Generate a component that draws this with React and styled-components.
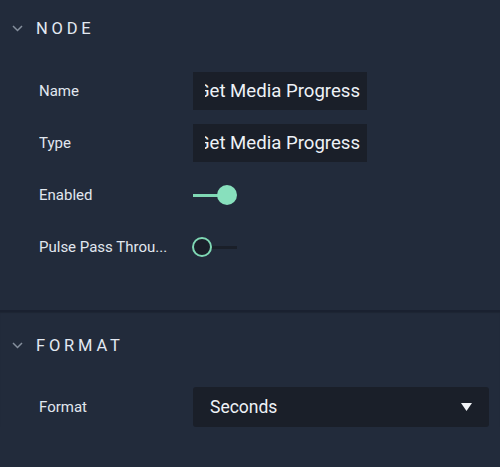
import React from "react";
import styled, { createGlobalStyle } from "styled-components";

const Global = createGlobalStyle`
  html, body { margin: 0; padding: 0; background: #222b3b; }
  body { font-family: Roboto, "Noto Sans", sans-serif; }
  #root { width: 500px; height: 467px; background: #222b3b; overflow: hidden; }
`;

const Panel = styled.div`
  display: flex;
  flex-direction: column;
  width: 500px;
`;

const Section = styled.section`
  display: flex;
  flex-direction: column;
  padding-top: ${(p) => p.$top || 0}px;
  padding-bottom: ${(p) => p.$bottom || 0}px;
  border-top: ${(p) => (p.$divided ? "2px solid #1a2130" : "none")};
  box-shadow: ${(p) => (p.$divided ? "inset 0 1px 1px rgba(0,0,0,0.15)" : "none")};
`;

const Header = styled.div`
  display: flex;
  align-items: center;
  height: 56px;
  padding-left: 12px;
  gap: 13px;
  color: #e3e9f2;
  font-size: 16.5px;
  font-weight: 400;
  letter-spacing: 3.8px;
`;

const Body = styled.div`
  display: flex;
  flex-direction: column;
  gap: 12px;
  padding-top: ${(p) => p.$top ?? 15}px;
`;

const Row = styled.div`
  display: grid;
  grid-template-columns: 154px 1fr;
  align-items: center;
  height: 40px;
  padding-left: 39px;
  padding-right: 11px;
`;

const Label = styled.div`
  color: #e1e7ef;
  font-size: 15px;
  white-space: nowrap;
  overflow: hidden;
  padding-right: 4px;
`;

const TextBox = styled.div`
  width: 174px;
  height: 38px;
  box-sizing: border-box;
  background: #1a1f29;
  display: flex;
  align-items: center;
  padding: 0 7px 0 12px;
`;

const TextClip = styled.div`
  flex: 1;
  min-width: 0;
  display: flex;
  justify-content: flex-end;
  overflow: hidden;
  white-space: nowrap;
  color: #eef2f7;
  font-size: 18.6px;
`;

const TextValue = styled.span`
  flex-shrink: 0;
`;

const Select = styled.div`
  height: 40px;
  box-sizing: border-box;
  background: #1a1f29;
  border-radius: 3px;
  display: flex;
  align-items: center;
  justify-content: space-between;
  padding: 0 17px 0 17px;
  color: #eef2f7;
  font-size: 17.5px;
`;

const Toggle = styled.div`
  position: relative;
  width: 44px;
  height: 20px;
  display: flex;
  align-items: center;
`;

const Track = styled.div`
  width: 100%;
  height: 3px;
  margin-left: ${(p) => (p.$on ? "0" : "8px")};
  margin-right: ${(p) => (p.$on ? "10px" : "0")};
  background: ${(p) => (p.$on ? "#7fd8b4" : "#1a1f29")};
`;

const Thumb = styled.div`
  position: absolute;
  top: 0;
  ${(p) => (p.$on ? "left: 24px;" : "left: -1px;")}
  width: 20px;
  height: 20px;
  box-sizing: border-box;
  border-radius: 50%;
  background: ${(p) => (p.$on ? "#88e0bd" : "#1a1f29")};
  border: ${(p) => (p.$on ? "none" : "2.5px solid #7fd8b4")};
`;

const Chevron = () => (
  <svg width="11" height="7" viewBox="0 0 11 7" fill="none">
    <path d="M1 1l4.5 4.5L10 1" stroke="#858f9d" strokeWidth="1.5" />
  </svg>
);

const Caret = () => (
  <svg width="11" height="8" viewBox="0 0 11 8">
    <path d="M0 0h11L5.5 8z" fill="#f2f4f7" />
  </svg>
);

const Switch = ({ on }) => (
  <Toggle>
    <Track $on={on} />
    <Thumb $on={on} />
  </Toggle>
);

const Field = ({ value }) => (
  <TextBox>
    <TextClip>
      <TextValue>{value}</TextValue>
    </TextClip>
  </TextBox>
);

export default function App() {
  return (
    <>
      <Global />
      <Panel>
        <Section $bottom={43}>
          <Header>
            <Chevron />
            <span>NODE</span>
          </Header>
          <Body>
            <Row>
              <Label>Name</Label>
              <Field value="Get Media Progress" />
            </Row>
            <Row>
              <Label>Type</Label>
              <Field value="Get Media Progress" />
            </Row>
            <Row>
              <Label>Enabled</Label>
              <Switch on />
            </Row>
            <Row>
              <Label>Pulse Pass Throu...</Label>
              <Switch />
            </Row>
          </Body>
        </Section>
        <Section $divided $top={5}>
          <Header>
            <Chevron />
            <span>FORMAT</span>
          </Header>
          <Body $top={14}>
            <Row>
              <Label>Format</Label>
              <Select>
                <span>Seconds</span>
                <Caret />
              </Select>
            </Row>
          </Body>
        </Section>
      </Panel>
    </>
  );
}
